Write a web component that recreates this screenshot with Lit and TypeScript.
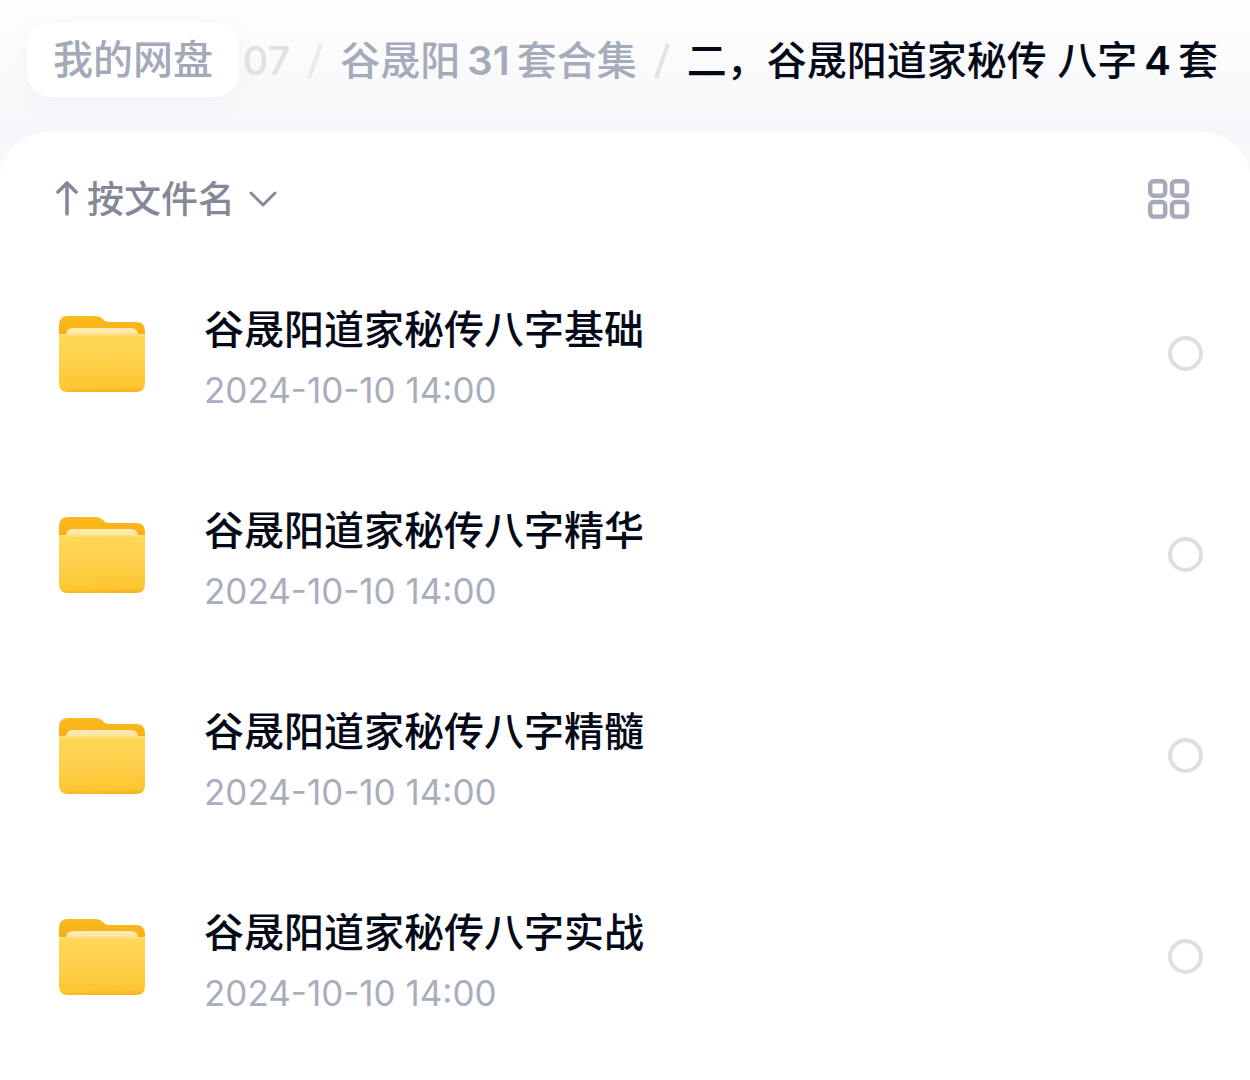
import { LitElement, html, css, svg } from "lit";
import { customElement, property, state } from "lit/decorators.js";

interface FolderEntry {
  id: string;
  name: string;
  modified: string;
}

const FOLDERS: FolderEntry[] = [
  { id: "basic", name: "谷晟阳道家秘传八字基础", modified: "2024-10-10 14:00" },
  { id: "essence", name: "谷晟阳道家秘传八字精华", modified: "2024-10-10 14:00" },
  { id: "marrow", name: "谷晟阳道家秘传八字精髓", modified: "2024-10-10 14:00" },
  { id: "practice", name: "谷晟阳道家秘传八字实战", modified: "2024-10-10 14:00" },
];

@customElement("folder-icon")
export class FolderIcon extends LitElement {
  static styles = css`
    :host {
      display: block;
      flex: none;
    }
    .icon {
      display: block;
    }
  `;

  render() {
    return html`
      <svg class="icon" width="88" height="78" viewBox="0 0 88 78" aria-hidden="true">
        <defs>
          <linearGradient id="back" x1="0" y1="0" x2="0" y2="1">
            <stop offset="0" stop-color="#fbbb1e" />
            <stop offset="1" stop-color="#f6a812" />
          </linearGradient>
          <linearGradient id="sheet" x1="0" y1="0" x2="0" y2="1">
            <stop offset="0" stop-color="#ffedbb" />
            <stop offset="1" stop-color="#ffdf88" />
          </linearGradient>
          <linearGradient id="front" x1="0.5" y1="0" x2="0.54" y2="1">
            <stop offset="0" stop-color="#ffd858" />
            <stop offset="0.5" stop-color="#fed04a" />
            <stop offset="0.92" stop-color="#fdc632" />
            <stop offset="1" stop-color="#f5b322" />
          </linearGradient>
        </defs>
        <path
          d="M1 30V10Q1 1 10 1H37Q42 1 45 4L47 6Q49 7 52 7H78Q87 7 87 16V30Z"
          fill="url(#back)"
        />
        <path d="M8 22V19Q9 13 15 13H73Q79 13 80 19V22Z" fill="url(#sheet)" />
        <path
          d="M1 19H87V68Q87 77 78 77H10Q1 77 1 68Z"
          fill="url(#front)"
        />
        <path d="M1 19H87V21H1Z" fill="#ffe28a" opacity="0.6" />
      </svg>
    `;
  }
}

@customElement("folder-row")
export class FolderRow extends LitElement {
  @property({ attribute: false }) entry!: FolderEntry;
  @property({ type: Boolean }) checked = false;

  static styles = css`
    :host {
      display: block;
    }
    .row {
      display: flex;
      align-items: center;
      min-height: 201px;
      padding: 0 47px 0 58px;
      box-sizing: border-box;
    }
    .text {
      display: flex;
      flex: 1;
      flex-direction: column;
      gap: 12px;
      min-width: 0;
      padding-top: 12px;
      margin-left: 58px;
    }
    .name {
      color: #050a18;
      font-size: 40px;
      font-weight: 500;
      line-height: 48px;
      text-decoration: none;
    }
    .date {
      color: #a9aebd;
      font-family: Inter, "Liberation Sans", sans-serif;
      font-size: 35px;
      line-height: 48px;
    }
    .check {
      appearance: none;
      flex: none;
      width: 35px;
      height: 35px;
      margin: 0;
      border: 4px solid #dcdfe4;
      border-radius: 50%;
      background: #fff;
      cursor: pointer;
    }
    .check:checked {
      border-color: #4a6cf7;
      background: #4a6cf7;
    }
  `;

  private toggle(e: Event) {
    this.checked = (e.target as HTMLInputElement).checked;
  }

  render() {
    return html`
      <div class="row">
        <folder-icon></folder-icon>
        <div class="text">
          <a class="name" id="name" href="#${this.entry.id}">${this.entry.name}</a>
          <time class="date">${this.entry.modified}</time>
        </div>
        <input
          class="check"
          type="checkbox"
          aria-labelledby="name"
          .checked=${this.checked}
          @change=${this.toggle}
        />
      </div>
    `;
  }
}

@customElement("app-root")
export class AppRoot extends LitElement {
  @state() private ascending = true;

  static styles = css`
    :host {
      display: block;
      min-height: 100vh;
      font-family: Inter, "Noto Sans CJK SC", sans-serif;
      background: linear-gradient(#fefefe, #f6f7fa 132px, #f9fafc 190px);
    }
    .page {
      display: flex;
      flex-direction: column;
      min-height: 100vh;
    }
    .crumbs {
      display: flex;
      align-items: center;
      justify-content: space-between;
      padding: 22px 32px 35px 27px;
      font-size: 40px;
      font-weight: 500;
      line-height: 48px;
      white-space: nowrap;
    }
    .root {
      flex: none;
      padding: 14px 26px 13px;
      border-radius: 24px;
      background: #fff;
      box-shadow: 0 4px 24px rgba(130, 140, 170, 0.06);
      color: #a4a9ba;
      text-decoration: none;
    }
    .trail {
      display: flex;
      gap: 17px;
      align-items: center;
      padding-top: 2px;
    }
    .link {
      color: #a6abbb;
      text-decoration: none;
    }
    .number {
      margin: 0 7px;
      font-weight: 600;
    }
    .faded {
      color: #dfe1e6;
    }
    .slash {
      display: block;
      flex: none;
      width: 16px;
      height: 38px;
    }
    .current {
      color: #050a18;
    }
    .panel {
      flex: 1;
      border-radius: 48px 48px 0 0;
      background: #fff;
    }
    .toolbar {
      display: flex;
      align-items: center;
      justify-content: space-between;
      padding: 39px 60px 26px 55px;
    }
    .sort,
    .view {
      display: flex;
      align-items: center;
      padding: 0;
      border: 0;
      background: none;
      color: #858997;
      font: inherit;
      cursor: pointer;
    }
    .sort {
      font-size: 37px;
      font-weight: 500;
      line-height: 54px;
    }
    .label {
      padding-top: 2px;
      margin: 0 14px 0 8px;
    }
    .view {
      color: #a5a9ba;
    }
    .list {
      margin: 0;
      padding: 0;
      list-style: none;
    }
  `;

  private slash(color: string) {
    return html`
      <svg class="slash" viewBox="0 0 16 38" aria-hidden="true">
        ${svg`<path d="M14 2 2 36" fill="none" stroke=${color} stroke-width="4"/>`}
      </svg>
    `;
  }

  render() {
    return html`
      <div class="page">
        <nav class="crumbs" aria-label="路径">
          <a class="root" href="#root">我的网盘</a>
          <div class="trail">
            <a class="link faded" href="#07">07</a>
            ${this.slash("#eaebee")}
            <a class="link" href="#collection"
              >谷晟阳<span class="number">31</span>套合集</a
            >
            ${this.slash("#e2e3e6")}
            <span class="current" aria-current="page"
              >二，谷晟阳道家秘传 八字<span class="number">4</span>套</span
            >
          </div>
        </nav>
        <main class="panel">
          <div class="toolbar">
            <button class="sort" @click=${() => (this.ascending = !this.ascending)}>
              <svg width="24" height="36" viewBox="0 0 24 36" aria-hidden="true">
                <path
                  d=${this.ascending ? "M12 33V2M3 11 12 2 21 11" : "M12 2V33M3 24 12 33 21 24"}
                  fill="none"
                  stroke="currentColor"
                  stroke-width="3.6"
                  stroke-linecap="round"
                  stroke-linejoin="round"
                />
              </svg>
              <span class="label">按文件名</span>
              <svg width="28" height="18" viewBox="0 0 28 18" aria-hidden="true">
                <path
                  d="M2 3 14 15 26 3"
                  fill="none"
                  stroke="currentColor"
                  stroke-width="3"
                  stroke-linecap="round"
                  stroke-linejoin="round"
                />
              </svg>
            </button>
            <button class="view" aria-label="网格视图">
              <svg width="42" height="40" viewBox="0 0 42 40" aria-hidden="true">
                <g fill="none" stroke="currentColor" stroke-width="4.4">
                  <rect x="2.2" y="2.2" width="15" height="14.6" rx="3.5" />
                  <rect x="24" y="2.2" width="15" height="14.6" rx="3.5" />
                  <rect x="2.2" y="23" width="15" height="14.6" rx="3.5" />
                  <rect x="24" y="23" width="15" height="14.6" rx="3.5" />
                </g>
              </svg>
            </button>
          </div>
          <ul class="list">
            ${FOLDERS.map(
              (entry) => html`<li><folder-row .entry=${entry}></folder-row></li>`
            )}
          </ul>
        </main>
      </div>
    `;
  }
}
